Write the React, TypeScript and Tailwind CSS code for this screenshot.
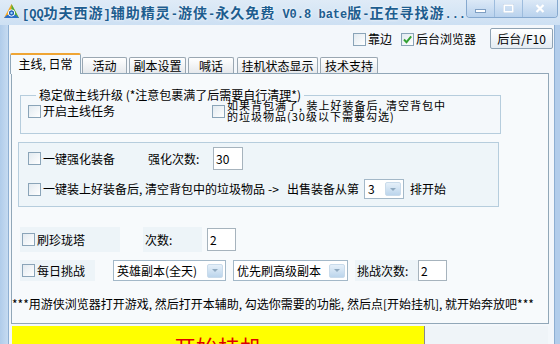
import React from "react";

// ascii run inside the bold title (narrow mono like the original)
const A = ({ children }: { children: React.ReactNode }) => (
  <span className="font-['Liberation_Mono',monospace] text-[12px] tracking-normal">{children}</span>
);

const Box = ({ checked = false }: { checked?: boolean }) => (
  <span className="relative inline-block w-[13px] h-[13px] shrink-0 border border-[#8aa4b8] bg-gradient-to-br from-[#e2eaf0] to-white">
    {checked && (
      <svg viewBox="0 0 11 11" className="absolute inset-0 w-[11px] h-[11px]">
        <path d="M2 5.5 L4.5 8.2 L9.2 2.4" fill="none" stroke="#33a133" strokeWidth="1.9" />
      </svg>
    )}
  </span>
);

const Check = ({ label, checked, className = "" }: { label: string; checked?: boolean; className?: string }) => (
  <div className={`flex items-center gap-[2px] ${className}`}>
    <Box checked={checked} />
    <span>{label}</span>
  </div>
);

const Field = ({ value, className = "" }: { value: string; className?: string }) => (
  <div className={`flex items-center shrink-0 border border-[#a6b3bd] bg-white pl-[2px] ${className}`}>{value}</div>
);

const Drop = () => (
  <div className="ml-auto mr-[2px] w-[16px] h-[14px] shrink-0 rounded-[2px] border border-[#c9dbeb] bg-gradient-to-b from-[#e6f0f9] to-[#bcd5ec] flex items-center justify-center">
    <svg viewBox="0 0 6 3" className="w-[6px] h-[3px]">
      <path d="M0 0 H6 L3 3 Z" fill="#8fa9c0" />
    </svg>
  </div>
);

const Select = ({ value, className = "" }: { value: string; className?: string }) => (
  <div className={`flex items-center shrink-0 border border-[#a3b8c8] bg-white pl-[3px] ${className}`}>
    <span>{value}</span>
    <Drop />
  </div>
);

const TABS = [
  { label: "主线, 日常", cls: "w-[71px]", active: true },
  { label: "活动", cls: "w-[45px] ml-[1px]" },
  { label: "副本设置", cls: "w-[57px] ml-[2px]" },
  { label: "喊话", cls: "w-[46px] ml-[2px]" },
  { label: "挂机状态显示", cls: "w-[81px] ml-[3px]" },
  { label: "技术支持", cls: "w-[58px] ml-[2px]" },
];

const Logo = () => (
  <svg viewBox="0 0 17 17" className="w-[17px] h-[17px]">
    <path d="M8.5 1 L1 15 H16 Z" fill="#f5a623" />
    <path d="M8.5 1 L16 15 H8.5 Z" fill="#4caf3c" />
    <path d="M1 15 H16 L13 12 H4 Z" fill="#2a6fc9" />
    <circle cx="8.5" cy="10" r="3.2" fill="#1d5fb8" stroke="#fff" strokeWidth="1" />
    <circle cx="8.5" cy="10" r="1.2" fill="#9fd4ff" />
  </svg>
);

const WinButtons = () => (
  <div className="ml-auto mr-[2px] flex h-[18px] rounded-b-[4px] border border-t-0 border-[#86a9cf] overflow-hidden">
    <div className="w-[29px] border-r border-[#9dbcdd] bg-gradient-to-b from-[#dce9f7] to-[#b9d2ed] flex items-center justify-center">
      <svg viewBox="0 0 11 4" className="w-[11px] h-[4px] mt-[4px]">
        <rect x="0.5" y="0.5" width="10" height="3" fill="#fff" stroke="#7f9fc3" />
      </svg>
    </div>
    <div className="w-[28px] border-r border-[#9dbcdd] bg-gradient-to-b from-[#dce9f7] to-[#b9d2ed] flex items-center justify-center">
      <svg viewBox="0 0 11 9" className="w-[11px] h-[9px]">
        <rect x="1" y="1" width="9" height="7" fill="none" stroke="#fff" strokeWidth="2" />
        <rect x="0" y="0" width="11" height="9" fill="none" stroke="#9bb6d4" strokeWidth="0.6" />
      </svg>
    </div>
    <div className="w-[35px] bg-gradient-to-b from-[#dce9f7] to-[#b9d2ed] flex items-center justify-center">
      <svg viewBox="0 0 10 9" className="w-[10px] h-[9px]">
        <path d="M1.5 1 L8.5 8 M8.5 1 L1.5 8" stroke="#fff" strokeWidth="2.2" />
      </svg>
    </div>
  </div>
);

export default function App() {
  return (
    <div className="w-[560px] h-[344px] overflow-hidden flex flex-col bg-[#b2cdeb] font-['Noto_Sans_CJK_SC',sans-serif] text-[12px] leading-[14px] text-black whitespace-nowrap">
      {/* title bar */}
      <div className="h-[25px] shrink-0 flex items-start bg-gradient-to-b from-[#dfebf7] to-[#cde0f3]">
        <div className="ml-[3px] mt-[3px]">
          <Logo />
        </div>
        <div className="ml-[2px] mt-[4px] leading-[16px] text-[14px] font-bold tracking-[1px] text-[#1d5d8f] [text-shadow:0_0_3px_#ffffff]">
          <A>[QQ</A>功夫西游<A>]</A>辅助精灵<A>-</A>游侠<A>-</A>永久免费<A> V0.8 bate</A>版<A>-</A>正在寻找游<A>...</A>
        </div>
        <WinButtons />
      </div>

      <div className="flex-1 flex min-h-0">
        <div className="w-[9px] shrink-0 bg-gradient-to-r from-[#b0ccea] to-[#c6dbf1] border-r border-[#8eafd2]" />

        <div className="w-[545px] shrink-0 bg-[#f3f7fb] flex flex-col">
          {/* top options */}
          <div className="h-[27px] shrink-0 flex items-start justify-end pt-[3px] pr-[1px]">
            <Check label="靠边" className="mt-[4px] mr-[9px]" />
            <Check label="后台浏览器" checked className="mt-[4px]" />
            <div className="ml-[14px] w-[63px] h-[21px] rounded-[2px] border border-[#8fa3b4] bg-gradient-to-b from-white to-[#e4ecf3] flex items-center justify-center">
              后台/F10
            </div>
          </div>

          {/* tabs */}
          <div className="h-[21px] shrink-0 flex items-end pl-[1px]">
            {TABS.map((t) =>
              t.active ? (
                <div
                  key={t.label}
                  className={`${t.cls} relative z-10 h-[21px] -mb-[1px] border border-b-0 border-[#91a7b8] border-t-2 border-t-[#efa534] rounded-t-[2px] bg-[#f7fafc] flex items-center justify-center pb-[1px]`}
                >
                  {t.label}
                </div>
              ) : (
                <div
                  key={t.label}
                  className={`${t.cls} h-[16px] border border-b-0 border-[#9aa7b2] rounded-t-[2px] bg-gradient-to-b from-white to-[#e6e9ec] flex items-center justify-center`}
                >
                  {t.label}
                </div>
              )
            )}
          </div>

          {/* tab panel */}
          <div className="ml-[2px] w-[538px] h-[251px] shrink-0 border border-[#91a7b8] bg-[#f7fafc] flex flex-col">
            <fieldset className="ml-[8px] mt-[16px] w-[481px] border border-[#b6cddd] bg-[#f4f8fb] pl-[7px] pb-[11px]">
              <legend className="ml-[8px] px-[3px] leading-[10px]">稳定做主线升级 (*注意包裹满了后需要自行清理*)</legend>
              <div className="h-[22px] flex items-center">
                <Check label="开启主线任务" className="w-[184px]" />
                <div className="flex items-center gap-[2px]">
                  <Box />
                  <div className="text-[11px] tracking-[1px] leading-[11px]">
                    如果背包满了, 装上好装备后, 清空背包中
                    <br />
                    的垃圾物品(30级以下需要勾选)
                  </div>
                </div>
              </div>
            </fieldset>

            <div className="ml-[6px] mt-[8px] w-[481px] border border-[#b6cddd] bg-[#eef5f9] pl-[9px] pt-[4px] pb-[6px] flex flex-col gap-[8px]">
              <div className="h-[23px] flex items-center">
                <Check label="一键强化装备" className="w-[120px]" />
                <span className="w-[65px]">强化次数:</span>
                <Field value="30" className="w-[30px] h-[23px]" />
              </div>
              <div className="h-[22px] flex items-center">
                <Box />
                <span className="ml-[2px] w-[225px]">一键装上好装备后, 清空背包中的垃圾物品</span>
                <span className="w-[19px]">-&gt;</span>
                <span className="w-[77px]">出售装备从第</span>
                <Select value="3" className="w-[40px] h-[20px]" />
                <span className="ml-[6px]">排开始</span>
              </div>
            </div>

            <div className="ml-[8px] mt-[20px] h-[25px] flex items-stretch">
              <div className="w-[100px] bg-[#edf4f8] flex items-center pl-[2px]">
                <Check label="刷珍珑塔" />
              </div>
              <div className="ml-[23px] w-[59px] bg-[#edf4f8] flex items-center pl-[2px]">次数:</div>
              <Field value="2" className="ml-[5px] self-center w-[29px] h-[23px]" />
            </div>

            <div className="ml-[8px] mt-[8px] h-[21px] flex items-stretch">
              <div className="w-[75px] bg-[#edf4f8] flex items-center pl-[2px]">
                <Check label="每日挑战" />
              </div>
              <Select value="英雄副本(全天)" className="ml-[18px] w-[113px]" />
              <Select value="优先刷高级副本" className="ml-[7px] w-[115px]" />
              <div className="ml-[7px] w-[63px] bg-[#edf4f8] flex items-center pl-[2px]">挑战次数:</div>
              <Field value="2" className="w-[29px]" />
            </div>

            <div className="mt-auto mb-[12px] leading-[14px]">
              ***用游侠浏览器打开游戏, 然后打开本辅助, 勾选你需要的功能, 然后点[开始挂机], 就开始奔放吧***
            </div>
          </div>

          {/* start button */}
          <div className="mt-[2px] ml-[3px] flex h-[40px] shrink-0">
            <div className="w-[413px] bg-[#ffff00] border-r border-[#8a8a8a] flex items-center justify-center text-[22px] leading-[40px] text-[#dd0000]">
              开始挂机
            </div>
            <div className="w-[123px] bg-[#eff4f8]" />
          </div>
        </div>

        <div className="flex-1 bg-[#b2cdeb] border-l border-[#8eafd2]" />
      </div>
    </div>
  );
}
